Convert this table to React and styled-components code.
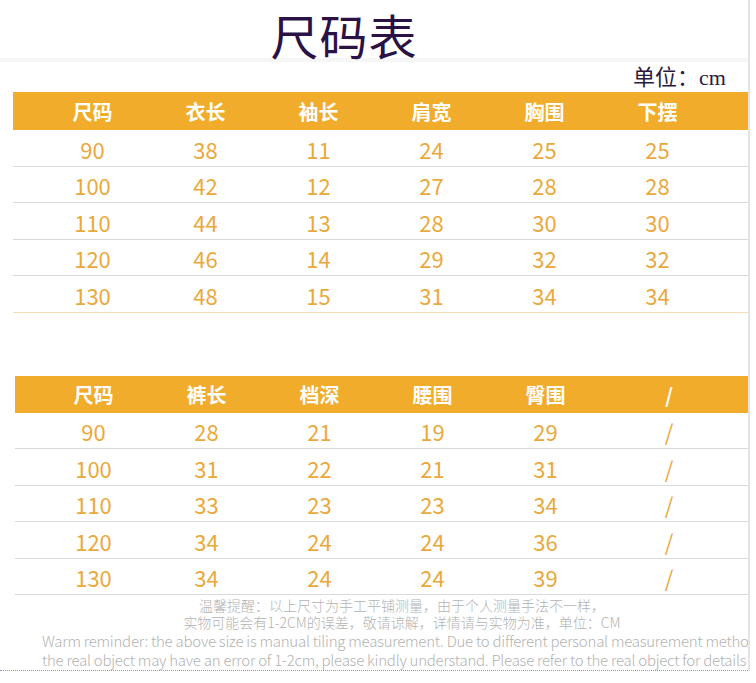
import React from "react";
import styled, { createGlobalStyle } from "styled-components";

const GlobalStyle = createGlobalStyle`
  body {
    margin: 0;
    background: #ffffff;
  }
`;

const Page = styled.div`
  width: 748px;
  overflow: hidden;
  background: #fff;
  border-right: 2px solid #e4e4e4;
`;

const Title = styled.h1`
  margin: 0;
  height: 52px;
  padding-top: 6px;
  line-height: 56px;
  padding-right: 60px;
  text-align: center;
  font-family: "Noto Sans CJK SC", sans-serif;
  font-weight: 400;
  font-size: 48px;
  color: #2b1246;
  letter-spacing: 1px;
  border-bottom: 4px solid #f6f6f6;
`;

const Unit = styled.div`
  height: 30px;
  line-height: 32px;
  text-align: right;
  padding-right: 22px;
  font-family: "Liberation Serif", "Noto Sans CJK SC", serif;
  font-size: 22px;
  color: #2b1a40;
`;

const Table = styled.div`
  margin-left: ${(p) => p.$offset}px;
  margin-top: ${(p) => p.$top || 0}px;
`;

const HeaderRow = styled.div`
  display: grid;
  grid-template-columns: ${(p) => p.$cols};
  padding-left: ${(p) => p.$pad}px;
  height: ${(p) => p.$h}px;
  align-items: center;
  background: #f0ac2a;
`;

const HeadCell = styled.div`
  text-align: center;
  font-family: "Noto Sans CJK SC", sans-serif;
  font-weight: 700;
  font-size: 20px;
  color: #ffffff;
`;

const Row = styled.div`
  display: grid;
  grid-template-columns: ${(p) => p.$cols};
  padding-left: ${(p) => p.$pad}px;
  height: 35.5px;
  align-items: center;
  border-bottom: 1.5px solid ${(p) => (p.$last ? p.$lastColor : "#d9d9d9")};
`;

const Cell = styled.div`
  text-align: center;
  font-family: "Noto Sans CJK SC", sans-serif;
  font-weight: 400;
  font-size: 22px;
  color: #eaa93c;
  padding-top: 2px;
`;

const Notes = styled.div`
  padding-top: 2px;
  color: #b3b3b3;
  font-family: "Noto Sans CJK SC", sans-serif;
  font-weight: 300;
`;

const CnLine = styled.div`
  text-align: center;
  font-size: 14px;
  line-height: 17px;
  padding-left: 56px;
`;

const EnLine = styled.div`
  padding-left: 42px;
  font-size: 15px;
  line-height: 19px;
  white-space: nowrap;
  letter-spacing: -0.25px;
`;

const Dotted = styled.div`
  margin-top: 1px;
  border-bottom: 1px dotted #7d9cc9;
`;

const top = {
  cols: "repeat(6, 113px)",
  head: ["尺码", "衣长", "袖长", "肩宽", "胸围", "下摆"],
  rows: [
    ["90", "38", "11", "24", "25", "25"],
    ["100", "42", "12", "27", "28", "28"],
    ["110", "44", "13", "28", "30", "30"],
    ["120", "46", "14", "29", "32", "32"],
    ["130", "48", "15", "31", "34", "34"],
  ],
};

const bottom = {
  cols: "repeat(5, 113px) 134px",
  head: ["尺码", "裤长", "档深", "腰围", "臀围", "/"],
  rows: [
    ["90", "28", "21", "19", "29", "/"],
    ["100", "31", "22", "21", "31", "/"],
    ["110", "33", "23", "23", "34", "/"],
    ["120", "34", "24", "24", "36", "/"],
    ["130", "34", "24", "24", "39", "/"],
  ],
};

const SizeTable = ({ data, offset, pad, top, headH, lastColor }) => (
  <Table $offset={offset} $top={top}>
    <HeaderRow $pad={pad} $h={headH} $cols={data.cols}>
      {data.head.map((h, i) => (
        <HeadCell key={i}>{h}</HeadCell>
      ))}
    </HeaderRow>
    {data.rows.map((r, i) => (
      <Row
        key={i}
        $pad={pad}
        $cols={data.cols}
        $last={i === data.rows.length - 1}
        $lastColor={lastColor}
      >
        {r.map((c, j) => (
          <Cell key={j}>{c}</Cell>
        ))}
      </Row>
    ))}
  </Table>
);

const App = () => {
  return (
    <Page>
      <GlobalStyle />
      <Title>尺码表</Title>
      <Unit>单位：cm</Unit>
      <SizeTable
        data={top}
        offset={13}
        pad={23}
        headH={38}
        lastColor="#f7dfb2"
      />
      <SizeTable
        data={bottom}
        offset={15}
        pad={22}
        top={63}
        headH={37}
        lastColor="#d9d9d9"
      />
      <Notes>
        <CnLine>温馨提醒：以上尺寸为手工平铺测量，由于个人测量手法不一样，</CnLine>
        <CnLine>实物可能会有1-2CM的误差，敬请谅解，详情请与实物为准，单位：CM</CnLine>
        <EnLine>
          Warm reminder: the above size is manual tiling measurement. Due to
          different personal measurement methods,
        </EnLine>
        <EnLine>
          the real object may have an error of 1-2cm, please kindly understand.
          Please refer to the real object for details
        </EnLine>
      </Notes>
      <Dotted />
    </Page>
  );
};

export default App;
